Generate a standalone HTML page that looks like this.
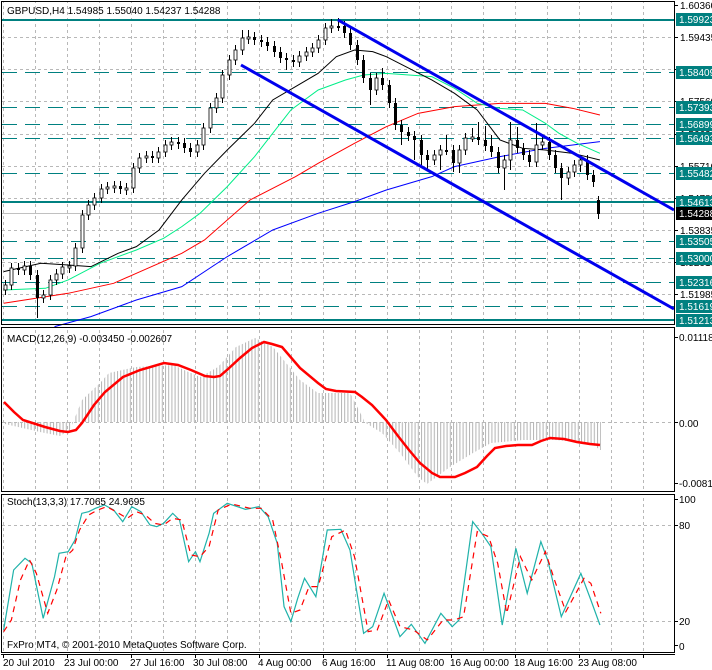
<!DOCTYPE html>
<html><head><meta charset="utf-8"><style>
html,body{margin:0;padding:0;background:#fff;}
svg{display:block;font-family:"Liberation Sans",sans-serif;font-size:10px;}
</style></head><body>
<svg width="712" height="670" viewBox="0 0 712 670" xmlns="http://www.w3.org/2000/svg">
<defs>
<pattern id="vg" x="35" y="0" width="32" height="6" patternUnits="userSpaceOnUse"><rect x="0" y="0" width="1" height="3" fill="#b8b8b8"/></pattern>
<pattern id="hp" x="5" y="0" width="3.2" height="10" patternUnits="userSpaceOnUse"><rect x="0" y="0" width="1" height="10" fill="#b4b4b4"/></pattern>
</defs>
<rect width="712" height="670" fill="#fff"/>
<rect x="2" y="2" width="672" height="322" fill="url(#vg)"/>
<rect x="2" y="328" width="672" height="163" fill="url(#vg)"/>
<rect x="2" y="495" width="672" height="157" fill="url(#vg)"/>
<g stroke="#b8b8b8" stroke-dasharray="3,3">
<line x1="2" x2="674" y1="37.5" y2="37.5"/><line x1="2" x2="674" y1="69.5" y2="69.5"/><line x1="2" x2="674" y1="101.5" y2="101.5"/><line x1="2" x2="674" y1="134.5" y2="134.5"/><line x1="2" x2="674" y1="166.5" y2="166.5"/><line x1="2" x2="674" y1="198.5" y2="198.5"/><line x1="2" x2="674" y1="230.5" y2="230.5"/><line x1="2" x2="674" y1="262.5" y2="262.5"/><line x1="2" x2="674" y1="294.5" y2="294.5"/>
<line x1="2" x2="674" y1="525.5" y2="525.5"/><line x1="2" x2="674" y1="621.5" y2="621.5"/>
</g>
<g stroke="#008080" stroke-width="1" stroke-dasharray="15,8">
<line x1="2" x2="674" y1="72.5" y2="72.5"/><line x1="2" x2="674" y1="107.5" y2="107.5"/>
<line x1="2" x2="674" y1="124.5" y2="124.5"/><line x1="2" x2="674" y1="138.5" y2="138.5"/>
<line x1="2" x2="674" y1="173.5" y2="173.5"/><line x1="2" x2="674" y1="241.5" y2="241.5"/>
<line x1="2" x2="674" y1="258.5" y2="258.5"/><line x1="2" x2="674" y1="282.5" y2="282.5"/>
<line x1="2" x2="674" y1="306.5" y2="306.5"/>
</g>
<g stroke="#008080" stroke-width="2">
<line x1="2" x2="674" y1="20" y2="20"/><line x1="2" x2="674" y1="202" y2="202"/><line x1="2" x2="674" y1="320" y2="320"/>
</g>
<line x1="2" x2="674" y1="213.5" y2="213.5" stroke="#c0c0c0"/>
<g transform="scale(0.4545,0.3333)" fill="none">
<polyline stroke="#0000ff" stroke-width="1" vector-effect="non-scaling-stroke" points="120,980 200,950 300,900 400,860 500,770 600,690 700,640 780,605 850,570 950,530 1000,500 1100,470 1200,445 1320,425"/>
<polyline stroke="#ff0000" stroke-width="1" vector-effect="non-scaling-stroke" points="8,910 150,880 250,850 300,820 400,760 450,720 550,600 650,530 700,490 780,430 850,380 920,340 1000,320 1100,310 1200,310 1260,325 1320,345"/>
<polyline stroke="#00ee88" stroke-width="1" vector-effect="non-scaling-stroke" points="8,870 100,865 150,840 220,790 300,750 360,715 400,680 440,640 500,560 560,470 600,400 640,330 700,270 760,240 800,225 850,220 950,230 1000,265 1050,310 1100,325 1150,330 1200,370 1230,400 1270,430 1320,460"/>
<polyline stroke="#000" stroke-width="1" vector-effect="non-scaling-stroke" points="8,815 90,790 150,795 200,800 260,760 300,740 350,690 400,600 450,520 500,450 560,370 600,300 650,260 700,220 740,170 780,150 820,155 850,170 950,240 1000,280 1050,330 1100,420 1150,445 1200,450 1260,460 1320,480"/>
</g>
<!-- candles -->
<path stroke="#000" stroke-width="1" fill="none" d="M5.5 280V295M11.5 263V290M18.5 263V275M24.5 261V275M30.5 261V280M37.5 270V318M43.5 290V303M50.5 275V300M56.5 269V285M62.5 262V279M69.5 261V273M75.5 243V271M82.5 210V253M88.5 200V220M94.5 193V210M101.5 184V203M107.5 182V194M114.5 181V193M120.5 181V194M126.5 183V195M133.5 163V193M139.5 153V173M146.5 151V163M152.5 151V163M158.5 147V163M165.5 140V157M171.5 137V150M178.5 137V149M184.5 138V153M190.5 143V157M197.5 140V157M203.5 123V150M210.5 103V133M216.5 93V113M222.5 70V103M229.5 55V80M235.5 45V65M242.5 30V55M248.5 30V44M254.5 32V45M261.5 35V47M267.5 37V51M274.5 41V57M280.5 47V63M286.5 53V70M293.5 55V67M299.5 51V67M306.5 47V61M312.5 43V57M318.5 35V53M325.5 23V45M331.5 19V33M338.5 18V31M344.5 21V38M350.5 28V50M357.5 40V65M363.5 55V83M370.5 73V105M376.5 73V95M382.5 68V90M389.5 80V108M395.5 98V130M401.5 120V145M408.5 127V141M414.5 131V160M421.5 135V165M427.5 150V170M434.5 150V165M440.5 145V170M446.5 135V155M453.5 145V172M459.5 145V173M465.5 133V155M472.5 128V142M478.5 122V145M485.5 126V151M491.5 135V157M498.5 147V173M504.5 155V190M510.5 122V170M517.5 127V153M523.5 143V160M529.5 150V167M536.5 123V167M542.5 137V150M549.5 137V160M555.5 150V173M561.5 163V200M568.5 167V185M574.5 160V177M580.5 155V172M587.5 155V180M593.5 170V187M598.5 196V219"/>
<g fill="#fff" stroke="#000" stroke-width="0.8">
<rect x="4" y="285" width="3" height="5"/><rect x="10" y="268" width="3" height="17"/><rect x="23" y="266" width="3" height="4"/><rect x="42" y="295" width="3" height="3"/><rect x="49" y="280" width="3" height="15"/><rect x="55" y="274" width="3" height="6"/><rect x="61" y="267" width="3" height="7"/><rect x="68" y="266" width="3" height="2"/><rect x="74" y="248" width="3" height="18"/><rect x="81" y="215" width="3" height="33"/><rect x="87" y="205" width="3" height="10"/><rect x="93" y="198" width="3" height="7"/><rect x="100" y="189" width="3" height="9"/><rect x="106" y="187" width="3" height="2"/><rect x="113" y="186" width="3" height="2"/><rect x="125" y="188" width="3" height="2"/><rect x="132" y="168" width="3" height="20"/><rect x="138" y="158" width="3" height="10"/><rect x="145" y="156" width="3" height="2"/><rect x="157" y="152" width="3" height="6"/><rect x="164" y="145" width="3" height="7"/><rect x="170" y="142" width="3" height="3"/><rect x="196" y="145" width="3" height="7"/><rect x="202" y="128" width="3" height="17"/><rect x="209" y="108" width="3" height="20"/><rect x="215" y="98" width="3" height="10"/><rect x="221" y="75" width="3" height="23"/><rect x="228" y="60" width="3" height="15"/><rect x="234" y="50" width="3" height="10"/><rect x="241" y="38" width="3" height="12"/><rect x="247" y="37" width="3" height="2"/><rect x="298" y="56" width="3" height="6"/><rect x="305" y="52" width="3" height="4"/><rect x="311" y="48" width="3" height="4"/><rect x="317" y="40" width="3" height="8"/><rect x="324" y="28" width="3" height="12"/><rect x="330" y="26" width="3" height="2"/><rect x="375" y="78" width="3" height="12"/><rect x="433" y="155" width="3" height="5"/><rect x="439" y="150" width="3" height="5"/><rect x="458" y="150" width="3" height="13"/><rect x="464" y="138" width="3" height="12"/><rect x="471" y="137" width="3" height="2"/><rect x="503" y="160" width="3" height="8"/><rect x="509" y="140" width="3" height="20"/><rect x="535" y="145" width="3" height="17"/><rect x="541" y="142" width="3" height="3"/><rect x="567" y="172" width="3" height="6"/><rect x="573" y="165" width="3" height="7"/><rect x="579" y="160" width="3" height="5"/>
</g>
<g fill="#000">
<rect x="17" y="268" width="3" height="2"/><rect x="29" y="266" width="3" height="9"/><rect x="36" y="275" width="3" height="23"/><rect x="119" y="186" width="3" height="3"/><rect x="151" y="156" width="3" height="2"/><rect x="177" y="142" width="3" height="2"/><rect x="183" y="143" width="3" height="5"/><rect x="189" y="148" width="3" height="4"/><rect x="253" y="37" width="3" height="3"/><rect x="260" y="40" width="3" height="2"/><rect x="266" y="42" width="3" height="4"/><rect x="273" y="46" width="3" height="6"/><rect x="279" y="52" width="3" height="6"/><rect x="285" y="58" width="3" height="2"/><rect x="292" y="60" width="3" height="2"/><rect x="337" y="26" width="3" height="2"/><rect x="343" y="26" width="3" height="7"/><rect x="349" y="33" width="3" height="12"/><rect x="356" y="45" width="3" height="15"/><rect x="362" y="60" width="3" height="18"/><rect x="369" y="78" width="3" height="12"/><rect x="381" y="78" width="3" height="7"/><rect x="388" y="85" width="3" height="18"/><rect x="394" y="103" width="3" height="22"/><rect x="400" y="125" width="3" height="7"/><rect x="407" y="132" width="3" height="4"/><rect x="413" y="136" width="3" height="4"/><rect x="420" y="140" width="3" height="15"/><rect x="426" y="155" width="3" height="5"/><rect x="445" y="150" width="3" height="2"/><rect x="452" y="150" width="3" height="13"/><rect x="477" y="137" width="3" height="3"/><rect x="484" y="140" width="3" height="6"/><rect x="490" y="146" width="3" height="6"/><rect x="497" y="152" width="3" height="16"/><rect x="516" y="140" width="3" height="8"/><rect x="522" y="148" width="3" height="7"/><rect x="528" y="155" width="3" height="7"/><rect x="548" y="142" width="3" height="13"/><rect x="554" y="155" width="3" height="13"/><rect x="560" y="168" width="3" height="10"/><rect x="586" y="160" width="3" height="15"/><rect x="592" y="175" width="3" height="7"/><rect x="597" y="200" width="3" height="14"/>
</g>
<g stroke="#0000ee" stroke-width="3">
<line x1="338" y1="20" x2="674" y2="210"/>
<line x1="241" y1="65" x2="674" y2="309"/>
</g>
<!-- MACD histogram -->
<polygon fill="url(#hp)" points="5,422 5,424 40,432 60,436 70,430 82,400 100,383 109,373 136,367 173,365 200,377 218,367 236,347 255,338 273,347 300,380 318,393 350,393 364,420 364,422 364,422 382,433 400,453 418,477 427,484 450,467 473,453 491,443 523,440 555,440 591,443 600,450 601,450 601,422"/>
<line x1="2" x2="674" y1="422.5" y2="422.5" stroke="#b8b8b8" stroke-dasharray="3,3"/>
<polyline fill="none" stroke="#ff0000" stroke-width="2.5" points="4,402 14,412 23,420 45,427 60,431 68,432 76,430 82,423 94,405 105,392 123,377 140,370 164,363 178,365 191,370 205,376 214,377 220,376 227,370 240,358 252,348 264,342 272,344 282,347 300,368 318,383 326,389 336,391 355,392 362,397 372,405 386,420 398,436 409,450 420,463 432,473 440,477 455,477 465,473 477,467 487,456 495,448 506,446 518,445 532,445 541,441 550,438 564,439 577,442 590,444 600,445"/>
<g transform="translate(0,480) scale(0.4545,0.3333)" fill="none">
<polyline stroke="#20b2aa" stroke-width="1.2" vector-effect="non-scaling-stroke" points="8,450 30,270 55,235 70,250 95,415 120,290 130,220 150,215 165,180 180,100 195,95 210,85 230,75 250,90 270,125 290,80 310,95 330,135 345,140 360,130 380,100 395,120 415,245 430,215 440,245 460,160 470,100 500,70 540,88 570,80 590,110 610,190 625,380 640,425 655,355 670,295 695,350 720,150 750,148 770,210 800,460 820,440 845,340 880,470 905,433 935,490 970,400 995,440 1010,420 1040,125 1060,160 1080,200 1105,435 1135,205 1160,340 1190,185 1205,240 1235,410 1278,280 1300,360 1320,435"/>
<polyline stroke="#ff0000" stroke-width="1.2" stroke-dasharray="6,5" vector-effect="non-scaling-stroke" points="8,455 25,420 45,300 65,240 80,280 105,400 125,330 145,230 160,210 175,150 195,105 215,90 235,80 255,95 280,115 300,95 320,105 340,130 360,135 380,115 400,120 420,225 440,230 460,200 480,90 510,72 550,85 575,85 600,120 620,250 640,400 660,390 680,320 700,320 730,170 760,150 780,230 810,455 830,450 855,360 880,440 910,450 940,480 975,420 1000,420 1020,410 1050,155 1075,170 1095,250 1115,400 1145,230 1170,300 1200,215 1220,300 1245,395 1285,295 1300,310 1322,400"/>
</g>
<g fill="none" stroke="#000" stroke-width="1">
<rect x="1.5" y="1.5" width="673" height="323"/>
<rect x="1.5" y="327.5" width="673" height="164"/>
<rect x="1.5" y="494.5" width="673" height="158"/>
</g>
<line x1="1" x2="675" y1="654.5" y2="654.5" stroke="#000"/>
<path stroke="#000" d="M3.5 654V658M67.5 654V658M131.5 654V658M195.5 654V658M259.5 654V658M323.5 654V658M387.5 654V658M451.5 654V658M515.5 654V658M579.5 654V658M643.5 654V658
M674 5.5H678M674 37.5H678M674 69.5H678M674 101.5H678M674 134.5H678M674 166.5H678M674 198.5H678M674 230.5H678M674 262.5H678M674 294.5H678
M674 337.5H678M674 422.5H678M674 483.5H678M674 499.5H678M674 525.5H678M674 621.5H678M674 645.5H678"/>
<g fill="#000">
<text x="680" y="9">1.60360</text><text x="680" y="41">1.59435</text><text x="680" y="73">1.58510</text><text x="680" y="105">1.57560</text><text x="680" y="138">1.56630</text><text x="680" y="170">1.55710</text><text x="680" y="202">1.54785</text><text x="680" y="234">1.53835</text><text x="680" y="266">1.52910</text><text x="680" y="298">1.51985</text>
</g>
<g fill="#008080">
<rect x="676" y="13" width="36" height="13"/><rect x="676" y="66" width="36" height="13"/><rect x="676" y="101" width="36" height="13"/><rect x="676" y="118" width="36" height="13"/><rect x="676" y="132" width="36" height="13"/><rect x="676" y="167" width="36" height="13"/><rect x="676" y="196" width="36" height="13"/><rect x="676" y="235" width="36" height="13"/><rect x="676" y="252" width="36" height="13"/><rect x="676" y="276" width="36" height="13"/><rect x="676" y="300" width="36" height="13"/><rect x="676" y="314" width="36" height="13"/>
</g>
<rect x="676" y="207" width="36" height="13" fill="#000"/>
<g fill="#fff">
<text x="679" y="23">1.59923</text><text x="679" y="76">1.58409</text><text x="679" y="111">1.57393</text><text x="679" y="128">1.56899</text><text x="679" y="142">1.56493</text><text x="679" y="177">1.55482</text><text x="679" y="206">1.54613</text><text x="679" y="217">1.54288</text><text x="679" y="245">1.53505</text><text x="679" y="262">1.53000</text><text x="679" y="286">1.52316</text><text x="679" y="310">1.51619</text><text x="679" y="324">1.51213</text>
</g>
<g fill="#000">
<text x="7" y="14">GBPUSD,H4  1.54985 1.55040 1.54237 1.54288</text>
<text x="7" y="342">MACD(12,26,9) -0.003450 -0.002607</text>
<text x="7" y="505">Stoch(13,3,3) 17.7065 24.9695</text>
<text x="7" y="648">FxPro MT4, © 2001-2010 MetaQuotes Software Corp.</text>
<text x="679" y="341">0.01118</text>
<text x="679" y="427">0.00</text>
<text x="679" y="487">-0.00810</text>
<text x="679" y="503">100</text>
<text x="679" y="529">80</text>
<text x="679" y="625">20</text>
<text x="679" y="650">0</text>
<text x="3" y="666">20 Jul 2010</text>
<text x="64" y="666">23 Jul 00:00</text>
<text x="130" y="666">27 Jul 16:00</text>
<text x="193" y="666">30 Jul 08:00</text>
<text x="258" y="666">4 Aug 00:00</text>
<text x="322" y="666">6 Aug 16:00</text>
<text x="386" y="666">11 Aug 08:00</text>
<text x="450" y="666">16 Aug 00:00</text>
<text x="514" y="666">18 Aug 16:00</text>
<text x="578" y="666">23 Aug 08:00</text>
</g>
</svg>
</body></html>
